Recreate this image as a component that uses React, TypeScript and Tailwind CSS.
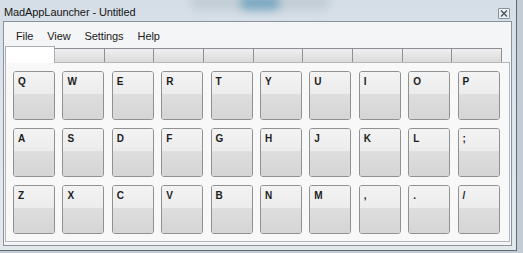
const rows = [
  ['Q', 'W', 'E', 'R', 'T', 'Y', 'U', 'I', 'O', 'P'],
  ['A', 'S', 'D', 'F', 'G', 'H', 'J', 'K', 'L', ';'],
  ['Z', 'X', 'C', 'V', 'B', 'N', 'M', ',', '.', '/'],
];

const menus = ['File', 'View', 'Settings', 'Help'];

const KeyButton = ({ label }: { label: string }) => (
  <div className="w-[42px] h-[49px] rounded-[3px] border border-[#8f9192] overflow-hidden flex flex-col shadow-[inset_0_0_0_1px_#fbfbfb]">
    <div className="h-[22px] bg-gradient-to-b from-[#f3f3f3] to-[#ececec] pl-[4px] pt-[4px] text-[10px] leading-[12px] font-bold text-[#1c1c1c]">
      {label}
    </div>
    <div className="flex-1 bg-gradient-to-b from-[#dedede] to-[#d5d5d5]" />
  </div>
);

export default function App() {
  return (
    <div
      className="w-[523px] h-[253px] overflow-hidden bg-[#c3ccd4] relative"
      style={{ fontFamily: '"Liberation Sans", Arial, sans-serif' }}
    >
      {/* window frame */}
      <div className="w-[517px] h-[251px] flex flex-col bg-gradient-to-b from-[#d5dee6] via-[#dfe6ec] to-[#e3e8ed] border-r border-b border-[#5f6a74] relative overflow-hidden">
        <div className="absolute left-[190px] top-[-6px] w-[140px] h-[16px] rounded-full bg-[#b9c6cf] blur-[5px] opacity-70" />
        <div className="absolute left-[240px] top-[-4px] w-[40px] h-[14px] rounded-full bg-[#4b8fb3] blur-[4px] opacity-60" />

        <div className="h-[21px] flex items-center pl-[4px] pr-[6px] relative">
          <span className="text-[11px] pt-[3px] text-[#151515] tracking-[-0.1px]">MadAppLauncher - Untitled</span>
          <div className="ml-auto mt-[5px] w-[12px] h-[11px] border border-[#8a939b] rounded-[1px] bg-[#eef1f4] flex items-center justify-center">
            <svg width="8" height="7" viewBox="0 0 8 7">
              <path d="M1 0.5 L7 6.5 M7 0.5 L1 6.5" stroke="#4a5058" strokeWidth="1.4" />
            </svg>
          </div>
        </div>

        {/* client area */}
        <div className="ml-[3px] mr-[4px] h-[225px] border border-[#8a939b] bg-[#f4f5f6] flex flex-col">
          <div className="h-[24px] flex items-center pl-[12px] pt-[4px] gap-[14px] text-[11px] text-[#1b1b1b] tracking-[-0.1px]">
            {menus.map((m) => (
              <span key={m}>{m}</span>
            ))}
          </div>

          <div className="ml-[1px] w-[497px] h-[16px] flex items-end">
            {Array.from({ length: 10 }).map((_, i) =>
              i === 0 ? (
                <div key={i} className="w-[50px] h-[17px] bg-white border border-b-0 border-[#a9acb0] relative z-10 mb-[-1px]" />
              ) : (
                <div
                  key={i}
                  className="flex-1 h-[14px] bg-gradient-to-b from-[#efefef] to-[#dbdbdb] border-t border-r border-[#8d9096]"
                />
              )
            )}
          </div>

          <div className="ml-[1px] w-[505px] h-[180px] border border-[#b4b6b9] bg-[#f8f8f8] pl-[7px] pt-[8px] flex flex-col gap-[8px]">
            {rows.map((row, r) => (
              <div key={r} className="flex gap-[7.4px]">
                {row.map((k) => (
                  <KeyButton key={k} label={k} />
                ))}
              </div>
            ))}
          </div>
        </div>
      </div>
    </div>
  );
}
